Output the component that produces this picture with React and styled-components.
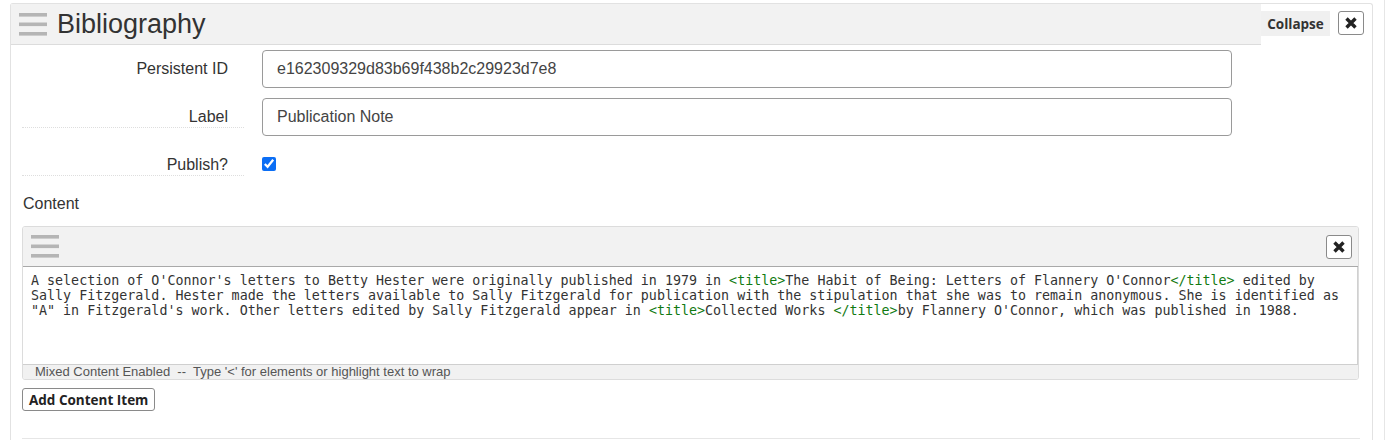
import React from "react";
import styled, { createGlobalStyle } from "styled-components";

const GlobalStyle = createGlobalStyle`
  html, body {
    margin: 0;
    padding: 0;
    background: #fff;
  }
  body {
    font-family: "Liberation Sans", Arial, sans-serif;
    color: #333;
  }
`;

const Hamburger = ({ width = 28, height = 23 }) => (
  <svg width={width} height={height} viewBox="0 0 28 23">
    <rect x="0" y="0" width="28" height="3.6" fill="#b5b5b5" />
    <rect x="0" y="9.5" width="28" height="3.6" fill="#b5b5b5" />
    <rect x="0" y="19" width="28" height="3.6" fill="#b5b5b5" />
  </svg>
);

// fat "close" cross like the old font-awesome glyph
const CrossIcon = () => (
  <svg width="12" height="12" viewBox="0 0 12 12">
    <path d="M1.5 1.5 L10.5 10.5 M10.5 1.5 L1.5 10.5" stroke="#222" strokeWidth="3.4" />
  </svg>
);

const App = () => {
  return (
    <Page>
      <GlobalStyle />
      <Panel>
        <PanelHead>
          <TitleBar>
            <Hamburger />
            <Title>Bibliography</Title>
          </TitleBar>
          <CollapseBtn>Collapse</CollapseBtn>
          <CloseBtn>
            <CrossIcon />
          </CloseBtn>
        </PanelHead>

        <FormBody>
          <FieldRow>
            <FieldLabel>Persistent ID</FieldLabel>
            <TextInput>e162309329d83b69f438b2c29923d7e8</TextInput>
          </FieldRow>
          <FieldRow>
            <FieldLabel dotted>Label</FieldLabel>
            <TextInput>Publication Note</TextInput>
          </FieldRow>
          <FieldRow>
            <FieldLabel dotted>Publish?</FieldLabel>
            <Check type="checkbox" checked readOnly />
          </FieldRow>

          <SectionLabel>Content</SectionLabel>

          <ContentPanel>
            <ContentHead>
              <Hamburger />
              <SmallClose>
                <CrossIcon />
              </SmallClose>
            </ContentHead>
            <Editor>
              A selection of O'Connor's letters to Betty Hester were originally
              published in 1979 in <Tag>&lt;title&gt;</Tag>The Habit of Being:
              Letters of Flannery O'Connor<Tag>&lt;/title&gt;</Tag> edited by
              Sally Fitzgerald. Hester made the letters available to Sally
              Fitzgerald for publication with the stipulation that she was to
              remain anonymous. She is identified as "A" in Fitzgerald's work.
              Other letters edited by Sally Fitzgerald appear in{" "}
              <Tag>&lt;title&gt;</Tag>Collected Works <Tag>&lt;/title&gt;</Tag>by
              Flannery O'Connor, which was published in 1988.
            </Editor>
            <StatusBar>
              {"Mixed Content Enabled  --  Type '<' for elements or highlight text to wrap"}
            </StatusBar>
          </ContentPanel>

          <AddButton>Add Content Item</AddButton>
          <Divider />
        </FormBody>
      </Panel>
    </Page>
  );
};

export default App;

const Page = styled.div`
  width: 1385px;
  min-height: 440px;
  border-right: 1px solid #e6e6e6;
  padding-top: 3px;
  box-sizing: border-box;
`;

const Panel = styled.div`
  margin-left: 10px;
  width: 1363px;
  min-height: 437px;
  box-sizing: border-box;
  border: 1px solid #e2e2e2;
  border-bottom: none;
  border-radius: 3px 3px 0 0;
`;

const PanelHead = styled.div`
  display: flex;
  align-items: flex-start;
`;

const TitleBar = styled.div`
  width: 1250px;
  height: 41px;
  box-sizing: border-box;
  background: #f2f2f2;
  border-bottom: 1px solid #dcdcdc;
  display: flex;
  align-items: center;
  padding-left: 8px;
  gap: 10px;
`;

const Title = styled.h1`
  margin: 0;
  font-family: "Liberation Sans", Arial, sans-serif;
  font-weight: 400;
  font-size: 27px;
  color: #333;
  line-height: 30px;
`;

const CollapseBtn = styled.button`
  margin-top: 7px;
  width: 69px;
  height: 25px;
  border: none;
  background: #f0f0f0;
  font-family: "Open Sans", sans-serif;
  font-weight: 700;
  font-size: 13.5px;
  color: #333;
  padding: 0;
`;

const CloseBtn = styled.button`
  margin: 7px 0 0 8px;
  width: 26px;
  height: 24px;
  box-sizing: border-box;
  border: 1px solid #8a8a8a;
  border-radius: 3px;
  background: #fff;
  display: flex;
  align-items: center;
  justify-content: center;
  padding: 0;
`;

const FormBody = styled.div`
  padding: 5px 0 0 11px;
`;

const FieldRow = styled.div`
  display: flex;
  align-items: flex-start;
  gap: 18px;
  margin-bottom: 10px;
`;

const FieldLabel = styled.div`
  width: 222px;
  height: 30px;
  box-sizing: border-box;
  padding: 10px 16px 0 0;
  text-align: right;
  font-size: 16px;
  line-height: 18px;
  color: #333;
  border-bottom: 1px dotted ${(p) => (p.dotted ? "#dedede" : "transparent")};
`;

const TextInput = styled.div`
  width: 970px;
  height: 38px;
  box-sizing: border-box;
  border: 1px solid #9a9a9a;
  border-radius: 4px;
  padding: 0 14px;
  display: flex;
  align-items: center;
  font-size: 16px;
  color: #444;
`;

const Check = styled.input`
  margin: 11px 0 0 0;
  width: 14px;
  height: 14px;
  accent-color: #0b6ef5;
`;

const SectionLabel = styled.div`
  margin-top: 19px;
  font-size: 16px;
  line-height: 18px;
  color: #333;
  padding-left: 1px;
`;

const ContentPanel = styled.div`
  margin-top: 13px;
  width: 1337px;
  box-sizing: border-box;
  border: 1px solid #dcdcdc;
  border-radius: 3px;
  overflow: hidden;
`;

const ContentHead = styled.div`
  height: 40px;
  box-sizing: border-box;
  background: #f2f2f2;
  border-bottom: 1px solid #a9a9a9;
  display: flex;
  align-items: center;
  justify-content: space-between;
  padding: 0 6px 0 8px;
`;

const SmallClose = styled(CloseBtn)`
  margin: 0;
`;

const Editor = styled.div`
  height: 97px;
  box-sizing: border-box;
  padding: 7px 8px 5px;
  font-family: "DejaVu Sans Mono", "Liberation Mono", monospace;
  font-size: 13.333px;
  line-height: 14.8px;
  color: #333;
  background: #fff;
  border-right: 1px solid #d0d0d0;
`;

const Tag = styled.span`
  color: #117a11;
`;

const StatusBar = styled.div`
  height: 15px;
  box-sizing: border-box;
  border-top: 1px solid #cfcfcf;
  background: #f1f1f1;
  padding-left: 12px;
  font-size: 13px;
  line-height: 14px;
  color: #555;
  white-space: pre;
`;

const AddButton = styled.button`
  margin-top: 8px;
  height: 23px;
  padding: 0 6px;
  box-sizing: border-box;
  border: 1px solid #8a8a8a;
  border-radius: 3px;
  background: #fff;
  font-family: "Open Sans", sans-serif;
  font-weight: 700;
  font-size: 13.5px;
  color: #222;
`;

const Divider = styled.div`
  margin-top: 27px;
  width: 1338px;
  border-top: 1px solid #e6e6e6;
`;
